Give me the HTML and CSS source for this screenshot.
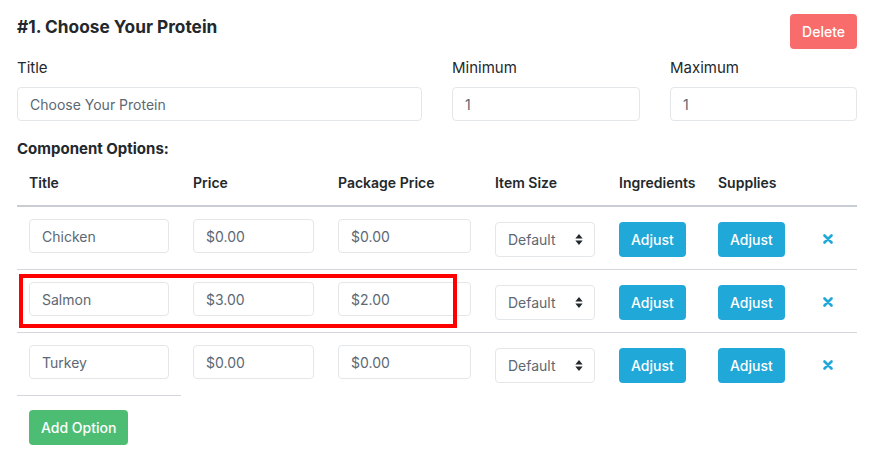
FILE: index.html
```html
<!DOCTYPE html>
<html lang="en">
<head>
  <meta charset="UTF-8">
  <title>Component Group</title>
  <link rel="stylesheet" href="styles.css">
</head>
<body>
  <div class="group">
    <div class="group-head">
      <h1>#1. Choose Your Protein</h1>
      <button class="btn btn-danger">Delete</button>
    </div>

    <div class="fields">
      <div class="field">
        <label>Title</label>
        <input type="text" value="Choose Your Protein">
      </div>
      <div class="field">
        <label>Minimum</label>
        <input type="text" value="1">
      </div>
      <div class="field">
        <label>Maximum</label>
        <input type="text" value="1">
      </div>
    </div>

    <h2>Component Options:</h2>

    <div class="options">
      <table>
        <colgroup>
          <col style="width:164px">
          <col style="width:145px">
          <col style="width:157px">
          <col style="width:124px">
          <col style="width:99px">
          <col style="width:92px">
          <col style="width:59px">
        </colgroup>
        <thead>
          <tr>
            <th>Title</th>
            <th>Price</th>
            <th>Package Price</th>
            <th>Item Size</th>
            <th>Ingredients</th>
            <th>Supplies</th>
            <th></th>
          </tr>
        </thead>
        <tbody>
          <tr>
            <td><input type="text" value="Chicken"></td>
            <td><input type="text" value="$0.00"></td>
            <td><input type="text" value="$0.00"></td>
            <td class="offset"><div class="select"><select><option>Default</option></select><svg viewBox="0 0 8 12"><path d="M4 0 8 5H0zM4 12 0 7h8z"/></svg></div></td>
            <td class="offset"><button class="btn btn-primary">Adjust</button></td>
            <td class="offset"><button class="btn btn-primary">Adjust</button></td>
            <td class="offset remove"><svg viewBox="0 0 10 10"><path d="M1.5 1.5l7 7M8.5 1.5l-7 7"/></svg></td>
          </tr>
          <tr>
            <td><input type="text" value="Salmon"></td>
            <td><input type="text" value="$3.00"></td>
            <td><input type="text" value="$2.00"></td>
            <td class="offset"><div class="select"><select><option>Default</option></select><svg viewBox="0 0 8 12"><path d="M4 0 8 5H0zM4 12 0 7h8z"/></svg></div></td>
            <td class="offset"><button class="btn btn-primary">Adjust</button></td>
            <td class="offset"><button class="btn btn-primary">Adjust</button></td>
            <td class="offset remove"><svg viewBox="0 0 10 10"><path d="M1.5 1.5l7 7M8.5 1.5l-7 7"/></svg></td>
          </tr>
          <tr class="last">
            <td><input type="text" value="Turkey"></td>
            <td><input type="text" value="$0.00"></td>
            <td><input type="text" value="$0.00"></td>
            <td class="offset"><div class="select"><select><option>Default</option></select><svg viewBox="0 0 8 12"><path d="M4 0 8 5H0zM4 12 0 7h8z"/></svg></div></td>
            <td class="offset"><button class="btn btn-primary">Adjust</button></td>
            <td class="offset"><button class="btn btn-primary">Adjust</button></td>
            <td class="offset remove"><svg viewBox="0 0 10 10"><path d="M1.5 1.5l7 7M8.5 1.5l-7 7"/></svg></td>
          </tr>
        </tbody>
      </table>
      <div class="highlight"></div>
    </div>

    <button class="btn btn-success add">Add Option</button>
  </div>
</body>
</html>
```

FILE: styles.css
```css
body {
  margin: 0;
  padding: 14px 27px 0 17px;
  font-family: Inter, "Noto Sans", sans-serif;
  color: #23282c;
  background: #fff;
}
.group-head {
  display: flex;
  justify-content: space-between;
  align-items: flex-start;
}
h1 {
  margin: 2px 0 0;
  font-size: 17.3px;
  line-height: 22px;
  font-weight: 700;
}
.btn {
  height: 35px;
  padding: 0 12px;
  border: none;
  border-radius: 4px;
  font-family: inherit;
  font-size: 14px;
  font-weight: 500;
  color: #fff;
  cursor: pointer;
}
.btn-danger {
  background: #f86c6b;
}
.btn-primary {
  background: #20a8d8;
}
.btn-success {
  background: #4dbd74;
}
.fields {
  display: grid;
  grid-template-columns: 405px 188px 187px;
  gap: 30px;
  margin-top: 9px;
}
.field label {
  display: block;
  font-size: 15px;
  line-height: 20px;
  margin-bottom: 9px;
}
input, select {
  box-sizing: border-box;
  width: 100%;
  height: 34px;
  padding: 0 12px;
  border: 1px solid #e4e7ea;
  border-radius: 4px;
  font-family: inherit;
  font-size: 14px;
  color: #5c6873;
  background: #fff;
  outline: none;
}
h2 {
  margin: 18px 0 0;
  font-size: 15px;
  line-height: 20px;
  font-weight: 700;
}
.options {
  position: relative;
}
table {
  width: 840px;
  table-layout: fixed;
  border-collapse: collapse;
}
th {
  text-align: left;
  font-size: 14px;
  font-weight: 600;
  line-height: 20px;
  padding: 14px 12px 12px;
  border-bottom: 2px solid #c8ced3;
}
td {
  padding: 12px;
  vertical-align: top;
  border-bottom: 1px solid #d3d7db;
  height: 38px;
}
tr.last td {
  border-bottom: none;
}
tr.last td:first-child {
  border-bottom: 1px solid #d3d7db;
}
td.offset {
  padding-top: 15px;
  height: 35px;
}
.select {
  position: relative;
}
.select select {
  height: 35px;
  appearance: none;
  -webkit-appearance: none;
}
.select svg {
  position: absolute;
  right: 12px;
  top: 12px;
  width: 8px;
  height: 11px;
  fill: #23282c;
  pointer-events: none;
}
.remove {
  text-align: center;
}
.remove svg {
  width: 10px;
  height: 10px;
  margin-top: 12px;
  stroke: #20a8d8;
  stroke-width: 2.6;
  stroke-linecap: round;
}
.highlight {
  position: absolute;
  left: 2px;
  top: 115px;
  width: 430px;
  height: 46px;
  border: 4px solid #ff0000;
  pointer-events: none;
}
.add {
  margin: 14px 0 0 12px;
}
```
